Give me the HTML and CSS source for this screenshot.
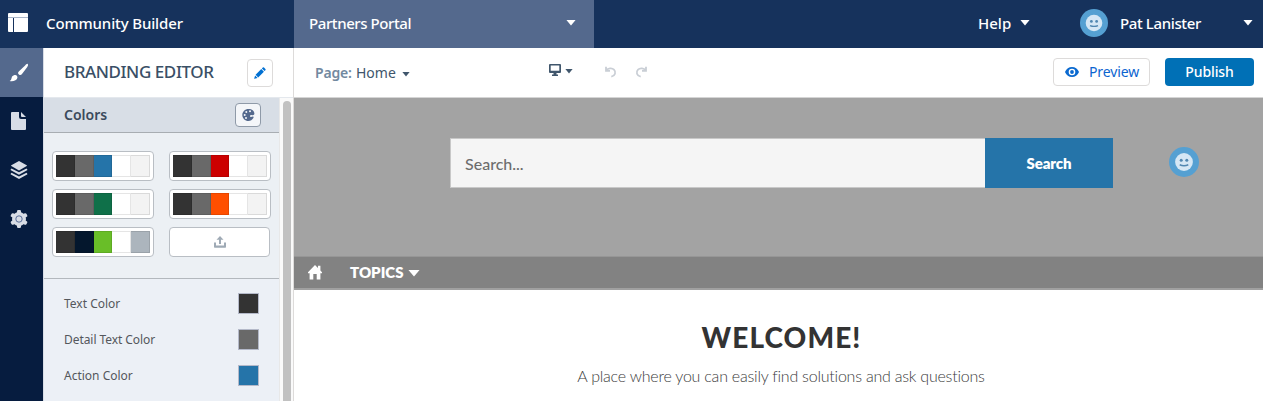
FILE: index.html
```html
<!DOCTYPE html>
<html lang="en">
<head>
<meta charset="utf-8">
<title>Community Builder</title>
<link rel="stylesheet" href="styles.css">
</head>
<body>
<header class="topbar">
  <div class="brand">
    <svg class="brand-icon" width="22" height="20" viewBox="0 0 22 20"><path fill="#fff" d="M2 0h18q1 0 1 1v3H1V1q0-1 1-1zM1 5h5v14H2q-1 0-1-1zM7 5h14v13q0 1-1 1H7z"/><path fill="#a9b5c8" d="M1 4h20v1H1z"/></svg>
    <span class="t t-brand">Community Builder</span>
  </div>
  <div class="site-tab"><span class="t t-site">Partners Portal</span><i class="caret"></i></div>
  <div class="account">
    <span class="t t-help">Help</span><i class="caret"></i>
    <svg class="avatar" width="28" height="28" viewBox="0 0 30 30"><use href="#face"/></svg>
    <span class="t t-user">Pat Lanister</span><i class="caret caret-end"></i>
  </div>
</header>
<div class="workspace">
  <nav class="rail">
    <a class="rail-item active"><svg width="20" height="20" viewBox="0 0 20 20"><path fill="#fff" d="M18.700.9c.8.7.2 2-.6 3.300l-5.300 7.100c-.8.9-1.800 1.100-2.900.1-1.100-1-1-2-.1-2.900l6.300-6C17 1.500 18.100.4 18.700.9zM5.500 12.100c1.600-.6 3.200.9 2.900 2.600-.4 2.700-4.500 4.200-7.800 3.300 1.300-.5 1.600-1.500 2-3 .3-1.500 1.500-2.500 2.900-2.900z"/></svg></a>
    <a class="rail-item"><svg width="16" height="18" viewBox="0 0 16 18"><path fill="#d8dde6" d="M1 0h7v5q0 2 2 2h5v10q0 1-1 1H1q-1 0-1-1V1q0-1 1-1zM10 0l5 5h-4q-1 0-1-1z"/></svg></a>
    <a class="rail-item"><svg width="18" height="18" viewBox="0 0 18 18"><g fill="#d8dde6"><path d="M9 0l7.700 4.300q.6.400 0 .8L9 9.400 1.300 5.100q-.6-.4 0-.8z"/><path d="M1.500 7.500L9 11.200l7.500-3.700.8.900q.4.400-.2.800L9 13.700.9 9.200q-.6-.4-.2-.8z"/><path d="M1.500 11.800L9 15.500l7.500-3.700.8.900q.4.400-.2.800L9 18 .9 13.500q-.6-.4-.2-.8z"/></g></svg></a>
    <a class="rail-item"><svg width="18" height="18" viewBox="0 0 18 18"><g fill="#d8dde6"><rect x="7" y="0" width="4" height="18" rx="1.200"/><rect x="7" y="0" width="4" height="18" rx="1.200" transform="rotate(60 9 9)"/><rect x="7" y="0" width="4" height="18" rx="1.200" transform="rotate(120 9 9)"/><circle cx="9" cy="9" r="7"/></g><circle cx="9" cy="9" r="3.200" fill="#d8dde6" stroke="#5a6e98" stroke-width="1"/></svg></a>
  </nav>
  <aside class="panel">
    <div class="panel-head"><span class="t t-title">BRANDING EDITOR</span>
      <button class="edit"><svg width="12" height="12" viewBox="0 0 12 12"><path fill="#0070d2" d="M8.800.6q.6-.6 1.200 0l1.400 1.400q.6.600 0 1.200l-.9.900L7.900 1.500zM7.300 2.100l2.600 2.600-5.700 5.700-2.600-2.600zM1.100 8.500l2.500 2.500L.5 11.800q-.4.100-.3-.3z"/></svg></button>
    </div>
    <div class="panel-body">
      <div class="panel-content">
        <div class="section-head"><span class="t t-colors">Colors</span>
          <button class="palette-btn"><svg width="13" height="12" viewBox="0 0 13 12"><path fill="#54698d" fill-rule="evenodd" d="M6.500 0C10 0 12.400 2 12.400 4.600c0 1.300-1 1.900-2.400 1.600-1.600-.4-2.600.6-1.700 1.500.5.600 1.600.1 2.500-.1 1-.2 1.100.7.400 1.700C10.200 10.900 8.600 12 6.500 12 3 12 .3 9.300.3 6S3 0 6.500 0zM4.300 2a1 1 0 100 2 1 1 0 000-2zM8 1.300a1 1 0 100 2 1 1 0 000-2zM2.700 5a1 1 0 100 2 1 1 0 000-2zM4 8a1 1 0 100 2 1 1 0 000-2z"/></svg></button>
        </div>
        <div class="palettes">
          <div class="palette"><i class="ink"></i><i class="gray"></i><i class="blue"></i><i class="white"></i><i class="pale"></i></div>
          <div class="palette"><i class="ink"></i><i class="gray"></i><i class="red"></i><i class="white"></i><i class="pale"></i></div>
          <div class="palette"><i class="ink"></i><i class="gray"></i><i class="green"></i><i class="white"></i><i class="pale"></i></div>
          <div class="palette"><i class="ink"></i><i class="gray"></i><i class="orange"></i><i class="white"></i><i class="pale"></i></div>
          <div class="palette"><i class="ink"></i><i class="navy"></i><i class="lime"></i><i class="white"></i><i class="steel"></i></div>
          <div class="palette upload"><svg width="12" height="12" viewBox="0 0 12 12"><path fill="#9faab5" d="M6 0l3.500 3.800H7V8H5V3.800H2.500zM0 6.500h2V9.500h8V6.500h2V11q0 .7-.7.700H.7Q0 11.700 0 11z"/></svg></div>
        </div>
        <div class="color-list">
          <div class="color-row"><span class="t t-c1">Text Color</span><i class="chip ink"></i></div>
          <div class="color-row"><span class="t t-c2">Detail Text Color</span><i class="chip gray"></i></div>
          <div class="color-row"><span class="t t-c3">Action Color</span><i class="chip blue"></i></div>
        </div>
      </div>
      <div class="scroll-track"><div class="scroll-thumb"></div></div>
    </div>
  </aside>
  <main class="main">
    <div class="toolbar">
      <span class="t t-page">Page:</span><span class="t t-home">Home</span><i class="caret small dark"></i>
      <div class="device"><svg width="13" height="12" viewBox="0 0 13 12"><path fill="#40566c" fill-rule="evenodd" d="M1 0h10q1 0 1 1v7q0 1-1 1H7.500v1.500H9V12H3v-1.500h1.500V9H1Q0 9 0 8V1q0-1 1-1zM1.700 1.600v5.200h8.600V1.600z"/></svg><i class="caret small dark"></i></div>
      <svg class="undo" width="12" height="12" viewBox="0 0 12 12"><path id="undo-arrow" d="M1 .8v4h4M1.300 4.500C3 2.200 6.800 1.400 9 3.600c2.300 2.400 1.300 6.300-2.700 7.100" fill="none" stroke="#c9ced5" stroke-width="1.800"/></svg>
      <svg class="redo" width="12" height="12" viewBox="0 0 12 12"><use href="#undo-arrow" transform="translate(12 0) scale(-1 1)"/></svg>
      <button class="preview"><svg width="14" height="10" viewBox="0 0 14 10"><path fill="#0b6ad0" fill-rule="evenodd" d="M7 0c3.200 0 5.600 1.900 6.800 4.500q.2.500 0 1C12.600 8.100 10.200 10 7 10S1.400 8.100.2 5.500q-.2-.5 0-1C1.400 1.900 3.800 0 7 0zm0 1.700a3.300 3.300 0 100 6.600 3.300 3.300 0 000-6.600z"/><circle cx="7" cy="5" r="1.900" fill="#0b6ad0"/></svg><span class="t t-preview">Preview</span></button>
      <button class="publish"><span class="t t-publish">Publish</span></button>
    </div>
    <section class="hero">
      <div class="search-field"><span class="t t-placeholder">Search...</span></div>
      <button class="search-btn"><span class="t t-search">Search</span></button>
      <svg class="hero-avatar" width="30" height="30" viewBox="0 0 30 30"><g id="face"><circle cx="15" cy="15" r="15" fill="#55a0d2"/><circle cx="15" cy="15" r="8.900" fill="#d5e7f5"/><circle cx="12.200" cy="13.300" r="1.500" fill="#5187b1"/><circle cx="17.800" cy="13.300" r="1.500" fill="#5187b1"/><path d="M10.700 17.700q4.300 1.900 8.600 0" fill="none" stroke="#5187b1" stroke-width="1.500"/></g></svg>
    </section>
    <nav class="site-nav">
      <svg width="14" height="15" viewBox="0 0 14 15"><path fill="#fff" d="M7 0l3 3V.8h2.400v4.600L14 7.200v1h-1.600V14.500H8.700V9H5.300v5.500H1.600V8.200H0v-1z"/></svg>
      <span class="t t-topics">TOPICS</span><i class="caret"></i>
    </nav>
    <section class="welcome">
      <h1 class="t t-welcome">WELCOME!</h1>
      <p class="t t-lead">A place where you can easily find solutions and ask questions</p>
    </section>
  </main>
</div>
</body>
</html>
```
FILE: styles.css
```css
* { box-sizing: border-box; }
body { margin: 0; width: 1263px; height: 401px; overflow: hidden; display: flex; flex-direction: column; background: #fff; font-family: "Noto Sans", sans-serif; }
button { font: inherit; margin: 0; padding: 0; display: flex; align-items: center; justify-content: center; }
svg { display: block; flex: none; }
.t { white-space: nowrap; line-height: 20px; }
.caret { flex: none; width: 10px; height: 6px; background: #fff; clip-path: polygon(0 0, 100% 0, 50% 100%); }
.caret.small { width: 8px; height: 5px; }
.caret.dark { background: #40566c; }

.topbar { display: flex; height: 48px; flex: none; background: #16325c; color: #fff; font-size: 15px; font-weight: 500; }
.brand { width: 294px; display: flex; align-items: center; padding: 0 0 3px 7px; }
.brand .t-brand { margin-left: 17px; letter-spacing: -.13px; }
.site-tab { width: 300px; display: flex; align-items: center; justify-content: space-between; padding: 0 18px 3px 15px; background: #54698d; }
.t-site { letter-spacing: -.42px; }
.account { flex: 1; display: flex; align-items: center; padding: 0 10px 3px 384px; }
.t-help { width: 33px; margin-right: 9px; }
.t-user { letter-spacing: -.38px; }
.avatar { margin: 0 12px 0 50px; }
.caret-end { margin-left: auto; }

.workspace { flex: 1; display: flex; min-height: 0; }
.rail { width: 43px; background: #061c3f; flex: none; }
.rail-item { height: 49px; width: 43px; display: flex; align-items: center; justify-content: center; padding: 0 6px 2px 0; }
.rail-item.active { background: #54698d; padding: 0 5px 0 0; }

.panel { width: 251px; flex: none; display: flex; flex-direction: column; border-left: 1px solid #d8dde6; border-right: 1px solid #dddbda; background: #fff; }
.panel-head { height: 50px; flex: none; display: flex; justify-content: space-between; align-items: center; padding: 0 20px 0 20px; border-bottom: 1px solid #e4e8ed; color: #3a4f66; font-size: 17px; font-weight: 500; }
.t-title { letter-spacing: -.42px; padding-bottom: 1px; }
.edit { width: 26px; height: 28px; border: 1px solid #dddbda; border-radius: 4px; background: #fff; }
.panel-body { flex: 1; display: flex; min-height: 0; }
.panel-content { width: 235px; background: #ecf0f6; }
.section-head { height: 35px; display: flex; align-items: center; justify-content: space-between; padding: 0 18px 0 20px; background: #d8dee6; border-bottom: 1px solid #a8adb2; color: #3b4a5c; font-size: 14px; font-weight: 600; }
.palette-btn { width: 26px; height: 24px; background: #f4f6f9; border: 1px solid #8f9aa8; border-radius: 4px; }
.palettes { height: 146px; display: grid; grid-template-columns: 102px 102px; grid-auto-rows: 30px; column-gap: 15px; row-gap: 8px; padding: 18px 8px 0; background: #ecf0f4; border-bottom: 1px solid #b3b8bd; }
.palette { display: flex; padding: 3px; background: #fff; border: 1px solid #b9bec4; border-radius: 4px; }
.palette i { width: 19px; height: 22px; border: 1px solid rgba(0,0,0,.1); border-left-width: 0; }
.palette i:nth-child(3) { width: 18px; }
.palette.upload { width: 101px; align-items: center; justify-content: center; padding-bottom: 4px; }
.ink { background: #333; } .gray { background: #696969; } .blue { background: #2574a9; }
.white { background: #fff; } .pale { background: #f3f3f3; } .red { background: #c00; }
.green { background: #0f7049; } .orange { background: #ff4f00; } .navy { background: #04172d; }
.lime { background: #69be28; } .steel { background: #acb5bd; }
.color-list { padding-top: 7px; }
.color-row { height: 36px; display: flex; align-items: center; justify-content: space-between; padding: 0 20px; color: #54575c; font-size: 12px; }
.t-c2 { letter-spacing: -.06px; }
.chip { width: 21px; height: 21px; margin-bottom: 1px; border: 1px solid #b4b9c9; }
.scroll-track { flex: 1; background: #fafafa; border-left: 1px solid #e8e8e8; }
.scroll-thumb { width: 8px; height: 310px; margin: 3px 0 0 3px; border-radius: 4px; background: #c1c1c1; }

.main { flex: 1; min-width: 0; }
.toolbar { height: 50px; display: flex; align-items: center; padding: 0 9px 2px 21px; border-bottom: 1px solid #d5d5d5; font-size: 14px; color: #40566c; }
.t-page { width: 37px; font-weight: 600; color: #7289a0; letter-spacing: -.2px; padding-top: 2px; }
.t-home { width: 41px; margin: 0 5px 0 4px; padding-top: 2px; }
.toolbar > .caret { margin-top: 5px; }
.device { width: 24px; margin: 0 32px 4px 139px; display: flex; align-items: center; justify-content: space-between; }
.device .caret { margin-top: 3px; }
.redo { margin-left: 18px; }
.preview { width: 97px; height: 28px; margin-left: auto; justify-content: flex-start; padding-left: 11px; gap: 10px; border: 1px solid #dddbda; border-radius: 4px; background: #fff; color: #0b64d0; }
.t-preview { letter-spacing: -.1px; }
.publish { width: 89px; height: 28px; margin-left: 15px; border: 0; border-radius: 4px; background: #0070b6; color: #fff; font-weight: 500; }
.t-publish { letter-spacing: -.1px; }
.hero { height: 158px; padding: 40px 0 0 156px; display: flex; background: #a3a3a3; font-family: Lato, sans-serif; }
.search-field { width: 535px; height: 50px; padding: 15px 14px; background: #f5f5f5; border: 1px solid #c8c8c8; border-right: 0; color: #6d6d6d; font-size: 16px; font-weight: 500; }
.search-btn { width: 128px; height: 50px; border: 0; background: #2574a9; color: #fff; font-size: 15px; font-weight: 800; letter-spacing: -.1px; }
.hero-avatar { margin: 9px 0 0 56px; }
.site-nav { height: 34px; display: flex; align-items: center; padding: 0 14px 1px; background: #828282; border-top: 1px solid #969696; border-bottom: 2px solid #a0a0a0; color: #fff; font-family: Lato, sans-serif; font-size: 15px; font-weight: 800; }
.t-topics { width: 54px; margin: 0 4px 0 28px; }
.site-nav .caret { width: 12px; height: 7px; margin-top: 2px; }
.welcome { padding-top: 30px; text-align: center; font-family: Lato, sans-serif; }
.t-welcome { margin: 0; padding-left: 6px; line-height: 34px; font-size: 28px; font-weight: 900; letter-spacing: 1.1px; color: #333; }
.t-lead { margin: 12px 0 0; padding-left: 5px; font-size: 16px; font-weight: 300; letter-spacing: -.22px; color: #3c3c3c; }
```
